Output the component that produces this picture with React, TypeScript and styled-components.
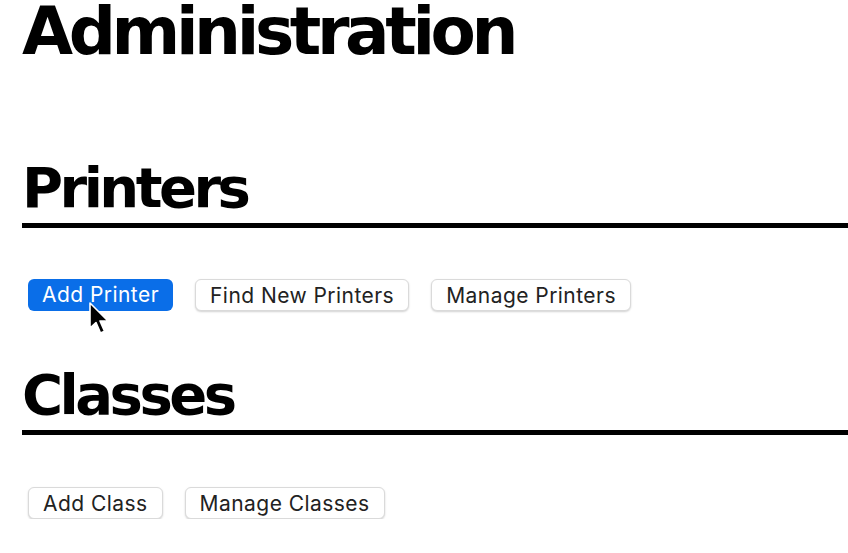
import React from "react";
import styled, { createGlobalStyle } from "styled-components";

const Global = createGlobalStyle`
  html, body { margin: 0; padding: 0; background: #ffffff; }
  body { font-family: "DejaVu Sans", sans-serif; color: #000; }
`;

const Page = styled.div`
  padding: 0 0 0 22px;
  position: relative;
`;

const Title = styled.h1`
  margin: 0;
  font-family: "DejaVu Sans", sans-serif;
  font-weight: 700;
  font-size: 66px;
  line-height: 64px;
  letter-spacing: -4.4px;
`;

const SectionTitle = styled.h2<{ $top: number }>`
  margin: ${(p) => p.$top}px 0 0 0;
  font-family: "DejaVu Sans", sans-serif;
  font-weight: 700;
  font-size: 56px;
  line-height: 60px;
  letter-spacing: -3.5px;
  padding-bottom: 5px;
  border-bottom: 5px solid #000;
`;

const ButtonRow = styled.div<{ $top: number; $gap: number }>`
  display: flex;
  gap: ${(p) => p.$gap}px;
  margin: ${(p) => p.$top}px 0 0 6px;
`;

const Button = styled.button<{ $primary?: boolean }>`
  height: 32px;
  padding: 0 14px;
  border-radius: 6px;
  font-family: "Inter", "Noto Sans", sans-serif;
  font-size: 21px;
  letter-spacing: 0.45px;
  line-height: 32px;
  cursor: default;
  border: ${(p) => (p.$primary ? "none" : "1px solid #dadada")};
  background: ${(p) => (p.$primary ? "#0a6ee8" : "#ffffff")};
  color: ${(p) => (p.$primary ? "#ffffff" : "#222222")};
  box-shadow: ${(p) =>
    p.$primary ? "none" : "0 1px 2px rgba(0,0,0,0.18)"};
`;

const Cursor = styled.svg`
  position: absolute;
  left: 88px;
  top: 302px;
  pointer-events: none;
`;

export default function App() {
  return (
    <>
      <Global />
      <Page>
        <Title>Administration</Title>
        <SectionTitle $top={94}>Printers</SectionTitle>
        <ButtonRow $top={51} $gap={22}>
          <Button $primary>Add Printer</Button>
          <Button>Find New Printers</Button>
          <Button>Manage Printers</Button>
        </ButtonRow>
        <SectionTitle $top={54}>Classes</SectionTitle>
        <ButtonRow $top={52} $gap={22}>
          <Button>Add Class</Button>
          <Button>Manage Classes</Button>
        </ButtonRow>
        <Cursor width="24" height="34" viewBox="0 0 24 34">
          <path
            d="M2 1 L2 26 L8 20.5 L12.5 31 L16.5 29.3 L12 19 L20 19 Z"
            fill="#000"
            stroke="#fff"
            strokeWidth="1.6"
            strokeLinejoin="round"
          />
        </Cursor>
      </Page>
    </>
  );
}
